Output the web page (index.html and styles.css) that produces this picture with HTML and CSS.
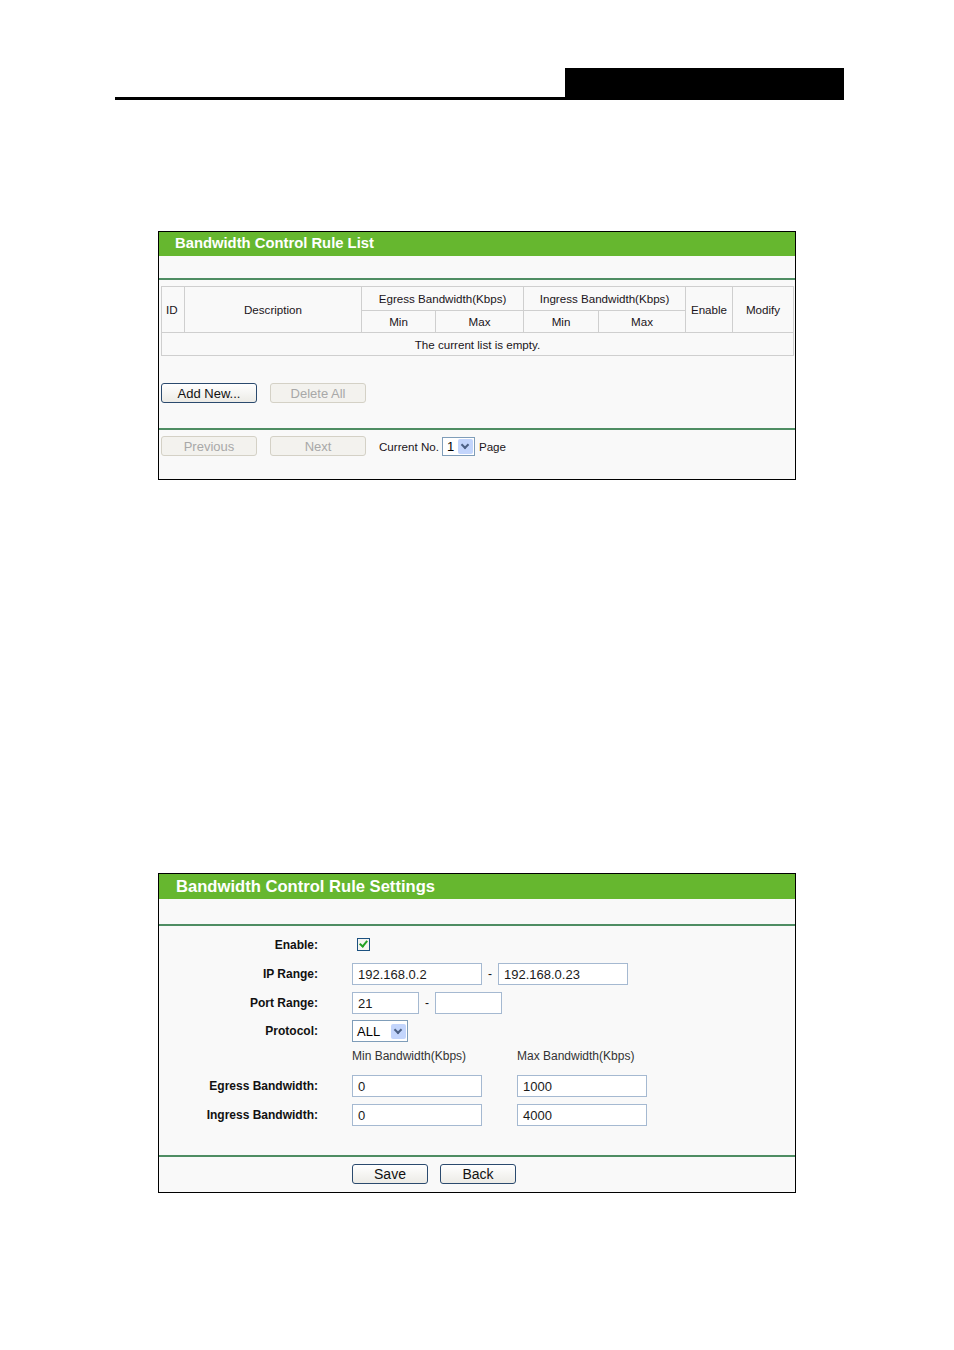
FILE: index.html
```html
<!DOCTYPE html>
<html lang="en">
<head>
  <meta charset="UTF-8" />
  <title>Bandwidth Control</title>
  <link rel="stylesheet" href="styles.css">
</head>
<body>

  <!-- page header -->
  <div class="page-head">
    <div class="head-box"></div>
  </div>

  <!-- rule list -->
  <div class="panel panel-list">
    <div class="panel-title">Bandwidth Control Rule List</div>
    <div class="panel-gap"></div>
    <div class="panel-body">
      <table class="rules">
        <tr>
          <td rowspan="2" class="c-id">ID</td>
          <td rowspan="2" class="c-desc">Description</td>
          <td colspan="2">Egress Bandwidth(Kbps)</td>
          <td colspan="2">Ingress Bandwidth(Kbps)</td>
          <td rowspan="2" class="c-en">Enable</td>
          <td rowspan="2" class="c-mod">Modify</td>
        </tr>
        <tr class="sub">
          <td class="c-min">Min</td>
          <td class="c-max">Max</td>
          <td class="c-min2">Min</td>
          <td class="c-max2">Max</td>
        </tr>
        <tr class="empty">
          <td colspan="8">The current list is empty.</td>
        </tr>
      </table>

      <div class="btn-row row-add">
        <button class="btn">Add New...</button>
        <button class="btn" disabled>Delete All</button>
      </div>
    </div>
    <div class="btn-row row-page">
      <button class="btn" disabled>Previous</button>
      <button class="btn" disabled>Next</button>
      <span class="page-label">Current No.</span>
      <span class="select sel-page"><span class="sel-val">1</span><span class="sel-arrow"></span></span>
      <span class="page-label">Page</span>
    </div>
  </div>

  <!-- rule settings -->
  <div class="panel panel-set">
    <div class="panel-title big">Bandwidth Control Rule Settings</div>
    <div class="panel-gap"></div>
    <div class="form">
      <label>Enable:</label>
      <div class="field"><span class="check"></span></div>

      <label>IP Range:</label>
      <div class="field">
        <span class="input w130">192.168.0.2</span>
        <span class="dash">-</span>
        <span class="input w130">192.168.0.23</span>
      </div>

      <label>Port Range:</label>
      <div class="field">
        <span class="input w67">21</span>
        <span class="dash">-</span>
        <span class="input w67"></span>
      </div>

      <label>Protocol:</label>
      <div class="field">
        <span class="select sel-proto"><span class="sel-val">ALL</span><span class="sel-arrow"></span></span>
      </div>

      <label></label>
      <div class="field heads">
        <span class="head-min">Min Bandwidth(Kbps)</span>
        <span>Max Bandwidth(Kbps)</span>
      </div>

      <label>Egress Bandwidth:</label>
      <div class="field">
        <span class="input w130">0</span>
        <span class="input w130 second">1000</span>
      </div>

      <label>Ingress Bandwidth:</label>
      <div class="field">
        <span class="input w130">0</span>
        <span class="input w130 second">4000</span>
      </div>
    </div>
    <div class="btn-row row-save">
      <button class="btn w76">Save</button>
      <button class="btn w76">Back</button>
    </div>
  </div>

</body>
</html>
```

FILE: styles.css
```css
body {
  margin: 0;
  background: #ffffff;
  font-family: "Liberation Sans", Arial, sans-serif;
  color: #000000;
}

.page-head {
  margin: 68px 0 0 115px;
  width: 729px;
  height: 29px;
  border-bottom: 3px solid #000000;
  display: flex;
  justify-content: flex-end;
}

.head-box {
  width: 279px;
  height: 29px;
  background: #000000;
}

.panel {
  margin-left: 158px;
  width: 636px;
  border: 1px solid #000000;
  background: #f9f9f9;
}

.panel-list {
  margin-top: 131px;
  height: 247px;
}

.panel-set {
  margin-top: 393px;
  height: 318px;
}

.panel-title {
  background: #66b72f;
  color: #ffffff;
  font-weight: bold;
  font-size: 14.8px;
  height: 24px;
  line-height: 23px;
  padding-left: 16px;
}

.panel-title.big {
  font-size: 16.6px;
  height: 25px;
  line-height: 25px;
  padding-left: 17px;
}

.panel-gap {
  height: 22px;
}

.panel-set .panel-gap {
  height: 25px;
}

.panel-list .panel-body {
  padding: 6px 0 0 2px;
  height: 142px;
  border-top: 2px solid #4e8d63;
}

.panel-list .row-page {
  border-top: 2px solid #4e8d63;
}

/* rule table */
.rules {
  border-collapse: collapse;
  width: 633px;
  font-size: 11.6px;
  color: #1a1420;
}

.rules td {
  border: 1px solid #cfcfcf;
  text-align: center;
  padding: 0;
  height: 21px;
}

.rules tr:first-child td {
  height: 23px;
}

.rules .empty td {
  height: 22px;
}

.rules .c-id { width: 18px; text-align: left; padding-left: 4px; }
.rules .c-desc { width: 176px; }
.rules .c-min { width: 73px; }
.rules .c-max { width: 87px; }
.rules .c-min2 { width: 74px; }
.rules .c-max2 { width: 86px; }
.rules .c-en { width: 46px; }
.rules .c-mod { width: 60px; }

/* buttons */
.btn-row {
  display: flex;
  align-items: center;
  gap: 13px;
}

.row-add {
  margin-top: 27px;
}

.row-page {
  padding: 6px 0 0 2px;
}

.row-save {
  border-top: 2px solid #4e8d63;
  padding: 7px 0 0 193px;
  gap: 12px;
}

.btn {
  width: 96px;
  height: 20px;
  padding: 0;
  font-family: "Liberation Sans", Arial, sans-serif;
  font-size: 13px;
  color: #111111;
  background: linear-gradient(#ffffff, #ecebe6);
  border: 1px solid #2b4a6e;
  border-radius: 3px;
}

.btn:disabled {
  color: #a8a8a8;
  background: #f3f2ee;
  border-color: #d4d1c6;
}

.btn.w76 {
  width: 76px;
  font-size: 14px;
}

.page-label {
  font-size: 11.6px;
  color: #1a1420;
}

.row-page .page-label:first-of-type {
  margin-right: -10px;
}

.row-page .sel-page + .page-label {
  margin-left: -9px;
}

/* selects */
.select {
  display: inline-flex;
  align-items: center;
  justify-content: space-between;
  height: 17px;
  border: 1px solid #7f9db9;
  background: #ffffff;
  font-size: 13px;
  padding: 0 1px 0 4px;
}

.sel-page { width: 26px; }
.sel-proto { width: 49px; height: 20px; font-size: 13px; }

.sel-arrow {
  width: 15px;
  height: 15px;
  background: #c3d5fc;
  border-radius: 2px;
  position: relative;
}

.sel-arrow::after {
  content: "";
  position: absolute;
  left: 4px;
  top: 3px;
  width: 4px;
  height: 4px;
  border-right: 2px solid #4d6185;
  border-bottom: 2px solid #4d6185;
  transform: rotate(45deg);
}

/* settings form */
.form {
  display: grid;
  grid-template-columns: 159px 1fr;
  grid-template-rows: 29px 29px 29px 28px 26px 29px 29px;
  column-gap: 34px;
  padding: 4px 0 26px;
  border-top: 2px solid #4e8d63;
}

.form label {
  font-size: 12px;
  font-weight: bold;
  color: #111111;
  text-align: right;
  align-self: center;
}

.field {
  display: flex;
  align-items: center;
  gap: 6px;
}

.field.heads {
  font-size: 12px;
  color: #333333;
  gap: 0;
  align-self: start;
  padding-top: 4px;
}

.head-min {
  width: 165px;
}

.check {
  width: 11px;
  height: 11px;
  margin-left: 5px;
  border: 1px solid #1c5180;
  background: #f4f4f0;
  position: relative;
}

.check::after {
  content: "";
  position: absolute;
  left: 3px;
  top: 0;
  width: 3px;
  height: 6px;
  border-right: 2px solid #21a121;
  border-bottom: 2px solid #21a121;
  transform: rotate(40deg);
}

.input {
  height: 22px;
  line-height: 22px;
  border: 1px solid #a5b9d1;
  background: #ffffff;
  font-size: 13px;
  color: #1a1a1a;
  padding-left: 5px;
  box-sizing: border-box;
}

.input.w130 { width: 130px; }
.input.w67 { width: 67px; }
.input.second { margin-left: 29px; }

.dash {
  font-size: 12px;
  color: #111111;
}
```
